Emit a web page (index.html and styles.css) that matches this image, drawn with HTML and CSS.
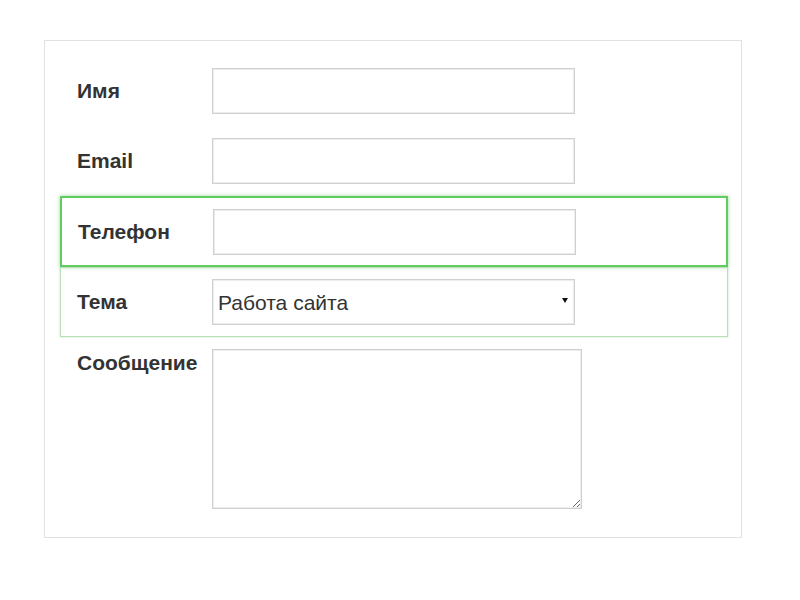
FILE: index.html
```html
<!DOCTYPE html>
<html lang="ru">
<head>
  <meta charset="UTF-8" />
  <meta name="viewport" content="width=device-width, initial-scale=1.0"/>
  <title>Обратная связь</title>
  <link rel="stylesheet" href="styles.css">
</head>
<body>

<form class="feedback">
  <div class="row">
    <label for="f-name">Имя</label>
    <input type="text" id="f-name">
  </div>

  <div class="row">
    <label for="f-email">Email</label>
    <input type="text" id="f-email">
  </div>

  <div class="row row-active">
    <label for="f-phone">Телефон</label>
    <input type="text" id="f-phone">
  </div>

  <div class="row row-hover">
    <label for="f-topic">Тема</label>
    <div class="select-wrap">
      <select id="f-topic">
        <option>Работа сайта</option>
        <option>Оплата</option>
        <option>Доставка</option>
      </select>
    </div>
  </div>

  <div class="row row-top">
    <label for="f-msg">Сообщение</label>
    <textarea id="f-msg"></textarea>
  </div>
</form>

</body>
</html>
```

FILE: styles.css
```css
body {
  margin: 0;
  padding: 0;
  background: #fff;
  font-family: "Liberation Sans", Arial, sans-serif;
  color: #333;
}

.feedback {
  width: 698px;
  box-sizing: border-box;
  margin: 40px 0 0 44px;
  padding: 15px 13px 16px 15px;
  border: 1px solid #e2e2e2;
}

.row {
  display: flex;
  align-items: center;
  padding: 11px 16px;
  border: 1px solid transparent;
}

.row label {
  width: 135px;
  flex: none;
  font-size: 21px;
  font-weight: bold;
}

.row-active {
  border: 2px solid #5fcc5f;
  padding-bottom: 10px;
  box-shadow: 0 0 4px rgba(90, 190, 90, 0.6);
}

.row-hover {
  border-color: #b9dfb9;
  box-shadow: 0 0 2px rgba(120, 200, 120, 0.5);
}

.row-top {
  align-items: flex-start;
}

.row-top label {
  margin-top: 2px;
}

input,
select,
textarea {
  box-sizing: border-box;
  border: 1px solid #d0d0d0;
  box-shadow: inset 0 0 0 1px #ececec;
  background: #fff;
  font-family: "Liberation Sans", Arial, sans-serif;
  font-size: 21px;
  color: #333;
  margin: 0;
}

input {
  width: 363px;
  height: 46px;
  padding: 0 6px;
}

.select-wrap {
  position: relative;
  width: 363px;
}

.select-wrap::after {
  content: "";
  position: absolute;
  right: 7px;
  top: 19px;
  border-left: 3px solid transparent;
  border-right: 3px solid transparent;
  border-top: 5px solid #111;
  pointer-events: none;
}

select {
  width: 363px;
  height: 46px;
  padding: 0 5px;
  appearance: none;
  -webkit-appearance: none;
  border-radius: 0;
}

textarea {
  width: 370px;
  height: 160px;
  padding: 6px;
}
```
